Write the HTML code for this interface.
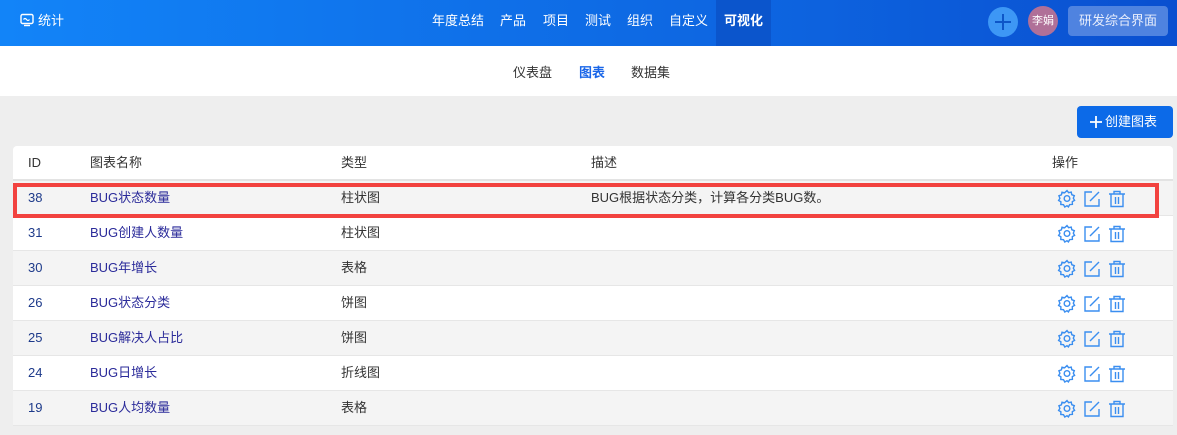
<!DOCTYPE html>
<html><head><meta charset="utf-8"><style>
*{margin:0;padding:0;box-sizing:border-box}
body{width:1177px;height:435px;background:#eeeeee;font-family:"Liberation Sans","Noto Sans CJK SC",sans-serif;font-size:13px;position:relative;overflow:hidden;color:#333}
.hdr{position:absolute;left:0;top:0;width:1177px;height:46px;background:linear-gradient(90deg,#1284f8,#0d62de 70%,#0a4fd0)}
.hdr span{position:absolute;color:#fff;font-size:13px;top:0;line-height:42px}
.sub{position:absolute;left:0;top:46px;width:1177px;height:50px;background:#fff}
.sub span{position:absolute;top:0;line-height:54px;font-size:13px;color:#333}
.btn{position:absolute;left:1077px;top:106px;width:96px;height:32px;background:#0c6ae8;border-radius:4px;color:#fff;font-size:13px;line-height:32px;padding-left:28px}
.card{position:absolute;left:13px;top:146px;width:1160px;height:280px;background:#fff;border-radius:4px}
.row{position:absolute;left:0;width:1160px;height:35px;border-bottom:1px solid #e6e6e6}
.row span{position:absolute;top:0;line-height:33px;font-size:13px}
.g{background:#f4f4f4}
.ic{position:absolute;top:8px;left:1044px}
</style></head><body>
<div class="hdr">
<svg style="position:absolute;left:20px;top:13px" width="14" height="14" viewBox="0 0 14 14"><rect x="1" y="1.5" width="12" height="9" rx="1.5" fill="none" stroke="#fff" stroke-width="1.4"/><path d="M3.5 6.5q1.5-2 3 0t3 0" fill="none" stroke="#fff" stroke-width="1.2"/><path d="M4 12.5h6" stroke="#fff" stroke-width="1.4"/></svg>
<span style="left:38px">统计</span>
<span style="left:432px">年度总结</span><span style="left:500px">产品</span><span style="left:543px">项目</span><span style="left:585px">测试</span><span style="left:627px">组织</span><span style="left:669px">自定义</span>
<div style="position:absolute;left:716px;top:0;width:55px;height:46px;background:#0b55cc"></div>
<span style="left:724px;font-weight:bold">可视化</span>
<div style="position:absolute;left:988px;top:7px;width:30px;height:30px;border-radius:50%;background:#3d97f5"></div>
<svg style="position:absolute;left:994px;top:13px" width="18" height="18"><path d="M9 1v16M1 9h16" stroke="#0d56c8" stroke-width="2"/></svg>
<div style="position:absolute;left:1028px;top:6px;width:30px;height:30px;border-radius:50%;background:#b07098;color:#fff;font-size:11px;line-height:30px;text-align:center">李娟</div>
<div style="position:absolute;left:1068px;top:6px;width:100px;height:30px;border-radius:4px;background:#4f83e0;color:#e8eefc;font-size:13px;line-height:30px;text-align:center">研发综合界面</div>
</div>
<div class="sub"><span style="left:513px">仪表盘</span><span style="left:579px;color:#1a66e8;font-weight:bold">图表</span><span style="left:631px">数据集</span></div>
<div class="btn"><svg style="position:absolute;left:13px;top:10px" width="12" height="12"><path d="M6 0v12M0 6h12" stroke="#fff" stroke-width="1.8"/></svg>创建图表</div>
<div class="card">
<div class="row" style="top:0;height:35px;border-bottom:2px solid #e3e3e3"><span style="left:15px">ID</span><span style="left:77px">图表名称</span><span style="left:328px">类型</span><span style="left:578px">描述</span><span style="left:1039px">操作</span></div>
</div>
<div id="rows"></div>
<div style="position:absolute;left:13px;top:183px;width:1146px;height:35px;border:4px solid #f2423f"></div>
<script>
var d=[["38","BUG状态数量","柱状图","BUG根据状态分类，计算各分类BUG数。"],["31","BUG创建人数量","柱状图",""],["30","BUG年增长","表格",""],["26","BUG状态分类","饼图",""],["25","BUG解决人占比","饼图",""],["24","BUG日增长","折线图",""],["19","BUG人均数量","表格",""]];
var ic='<svg class="ic" width="90" height="20" viewBox="0 0 90 20"><g fill="none" stroke="#3a8ef0" stroke-width="1.4"><path d="M9 1.5l1.6 2.2 2.6-.6.6 2.6 2.5 1-1 2.5 1.3 2.2-2.3 1.3.1 2.7-2.7.2-1.3 2.3L9 16.7 6.8 18l-1.3-2.3-2.7-.2.1-2.7L.6 11.5 1.9 9.3.9 6.8l2.5-1 .6-2.6 2.6.6z" transform="translate(1 0)"/><circle cx="10" cy="9.5" r="2.8"/><path d="M35 3h-7v14h14v-7"/><path d="M33 12l9-9"/><path d="M52 5h16M57 5V2.5h6V5M54 5v12.5h12V5M58.5 8v7M61.5 8v7"/></g></svg>';
var h='';
d.forEach(function(r,i){h+='<div class="row'+(i%2==0?' g':'')+'" style="left:13px;top:'+(181+i*35)+'px;width:1160px"><span style="left:15px;color:#1d3a8a">'+r[0]+'</span><span style="left:77px;color:#2b2b9a">'+r[1]+'</span><span style="left:328px">'+r[2]+'</span><span style="left:578px">'+r[3]+'</span>'+ic+'</div>';});
document.getElementById('rows').innerHTML=h;
</script>
</body></html>
